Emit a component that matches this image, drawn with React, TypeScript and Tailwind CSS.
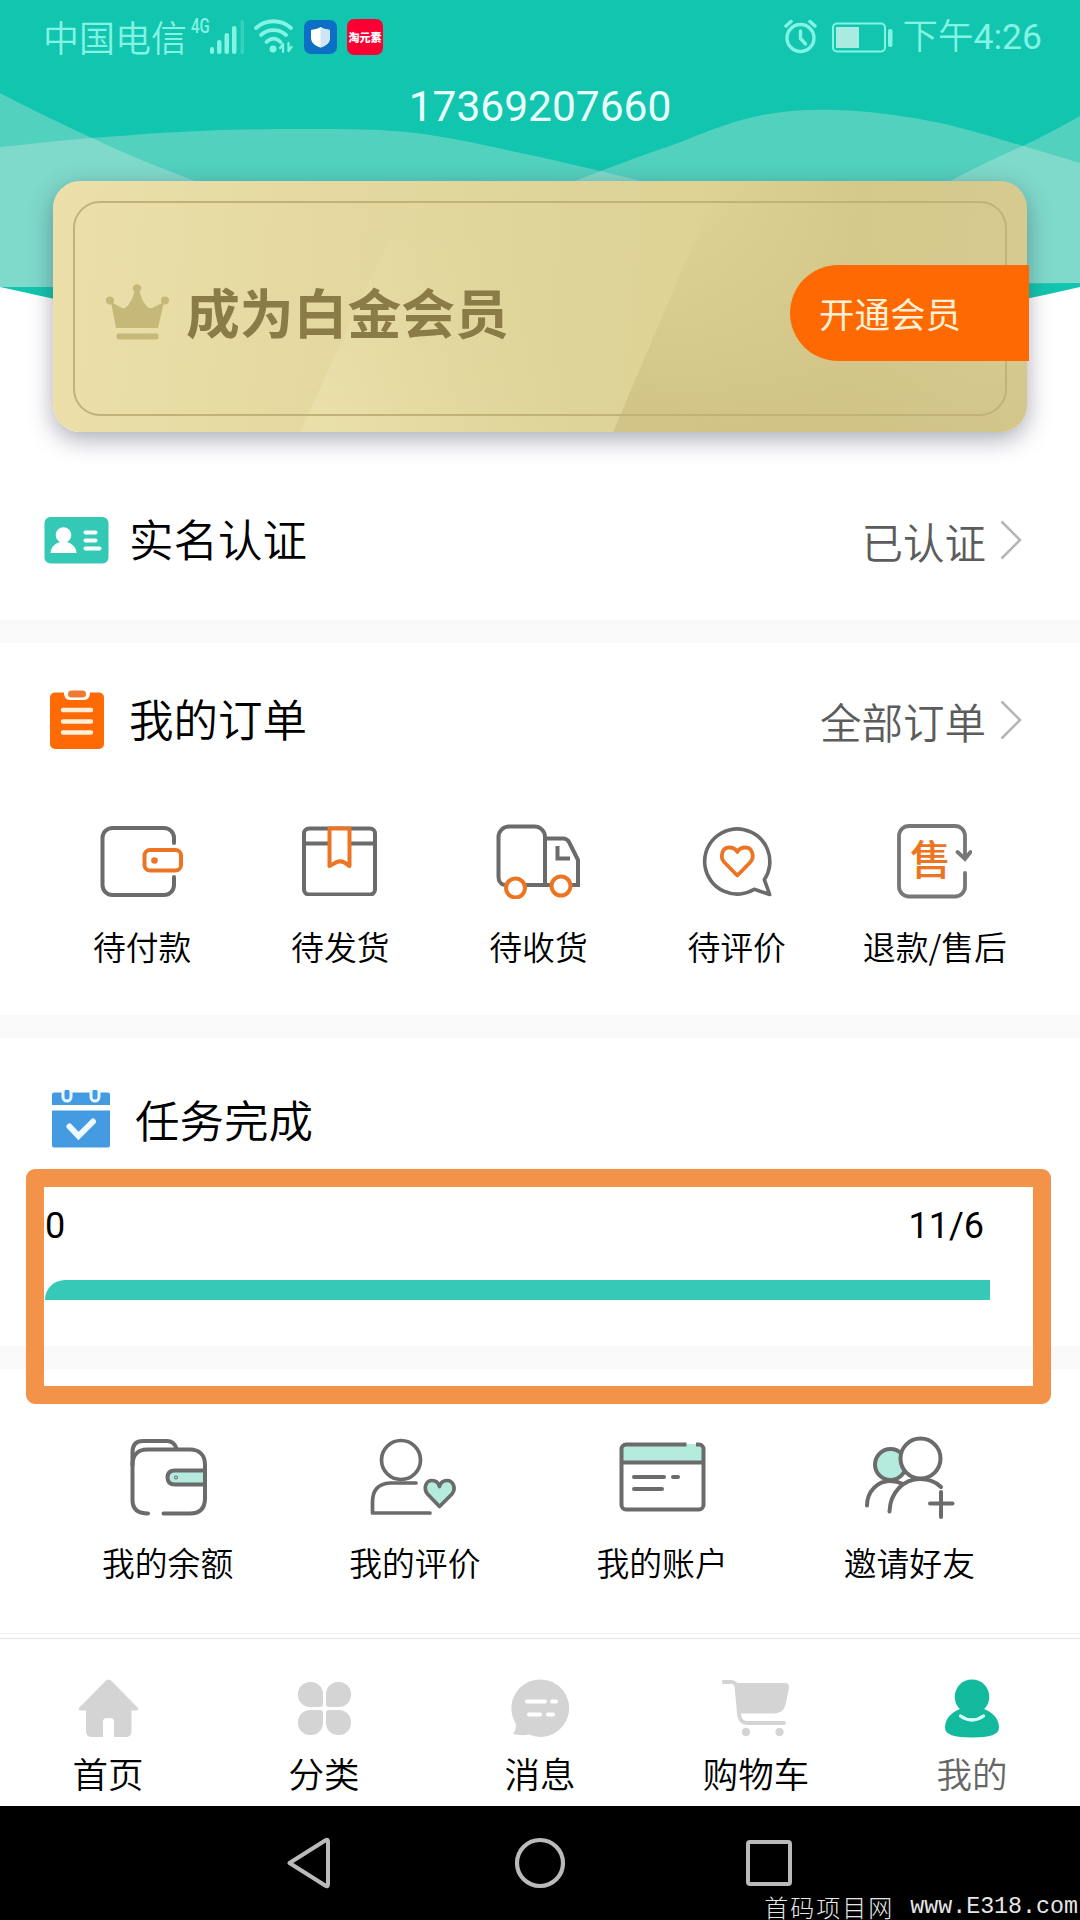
import type { ReactNode } from "react";
import clsx from "clsx";

const GRAY = "#6b6b6b";
const ORANGE = "#ec7524";
const MINT = "#b5ebdd";
const TAB = "#d4d4d4";

function HeaderWaves() {
  return (
    <svg className="absolute inset-x-0 top-0" width="1080" height="350" viewBox="0 0 1080 350">
      <path d="M0 0H1080V287Q810 350 540 350T0 287Z" fill="#12c5ae" />
      <g fill="#e8ede8" fillOpacity="0.3">
        <path d="M0 93C32 110 62 124 92 138C126 154 160 168 195 181L480 287H0Z" />
        <path d="M0 147C40 143 80 138 120 136C180 131 240 129 300 129C350 129 395 129 430 135C470 141 505 150 540 157C575 165 610 173 640 181L980 287H0Z" />
        <path d="M300 285L575 181C608 168 640 156 670 146C695 137 718 126 745 119C775 111 805 109 835 110C868 111 900 115 930 121C962 127 992 137 1020 145L1080 163V283Z" />
        <path d="M760 285L950 181C975 168 1000 156 1025 145C1044 136 1062 126 1080 116V283Z" />
      </g>
    </svg>
  );
}

function StatusBar() {
  return (
    <div className="relative flex h-[74px] items-center pr-[38px] pl-[43px] text-[#83f3e4]">
      <span className="mt-[-3px] text-[36px] leading-none font-[350]">中国电信</span>
      <span className="mb-[22px] ml-1 w-[20px] origin-left scale-x-75 font-[Roboto] text-[20px] leading-none font-medium">4G</span>
      <svg className="ml-[-2px]" width="36" height="36" viewBox="0 0 36 36" fill="currentColor">
        <rect x="1" y="28" width="4" height="7" rx="2" />
        <rect x="8" y="21" width="4.500" height="14" rx="2" />
        <rect x="15.500" y="14" width="4.500" height="21" rx="2" />
        <rect x="23" y="7" width="4.500" height="28" rx="2" />
        <rect x="31.500" y="1" width="3.500" height="34" rx="1.500" fillOpacity="0.3" />
      </svg>
      <svg className="mt-[-2px] ml-[9px]" width="40" height="35" viewBox="0 0 40 35" fill="none" stroke="currentColor" strokeWidth="3.800" strokeLinecap="round">
        <path d="M2 9C12 0 27 0 37 9M7 16C14 9.500 25 9.500 32 16M12.500 23C17 18.500 22 18.500 26.500 23" />
        <circle cx="19" cy="30" r="3.500" fill="currentColor" stroke="none" />
        <path d="M29 25V33M26 29L29 25M34.500 24V32M37.500 28L34.500 32" strokeWidth="2.200" />
      </svg>
      <svg className="ml-[10px]" width="33" height="34" viewBox="0 0 33 34">
        <rect width="33" height="34" rx="7" fill="#0b6fc6" />
        <path d="M16.500 7C19 9 23 9.500 26 10V18C26 23 21 26.500 16.500 27.500C12 26.500 7 23 7 18V10C10 9.500 14 9 16.500 7Z" fill="#fff" />
        <path d="M16.500 7C19 9 23 9.500 26 10V18C26 23 21 26.500 16.500 27.500Z" fill="#cfe4f4" />
      </svg>
      <div className="ml-[10px] flex h-[36px] w-[36px] items-center justify-center rounded-[7px] bg-[#fb0032]">
        <span className="text-[11px] leading-none font-black whitespace-nowrap text-white">淘元素</span>
      </div>

      <svg className="mt-[-2px] ml-auto" width="33" height="35" viewBox="0 0 33 35" fill="none" stroke="currentColor" strokeLinecap="round">
        <circle cx="16.500" cy="19" r="13.500" strokeWidth="3.400" />
        <path d="M16.500 12V19.500L21.500 25" strokeWidth="3.400" />
        <path d="M2 7L7 2.500M31 7L26 2.500" strokeWidth="3.500" />
      </svg>
      <svg className="ml-[15px]" width="62" height="31" viewBox="0 0 62 31" fill="none" stroke="currentColor">
        <rect x="1" y="1.500" width="52" height="28" rx="4" strokeWidth="2" />
        <rect x="4" y="5" width="23" height="21" fill="#a9ebe0" stroke="none" />
        <rect x="56" y="7" width="4.500" height="18" rx="2" fill="currentColor" stroke="none" />
      </svg>
      <span className="mt-[-2px] ml-[9px] text-[35.5px] leading-none font-[350]">
        下午<span className="font-[Roboto] font-normal">4:26</span>
      </span>
    </div>
  );
}

function MemberCard() {
  return (
    <div className="relative mx-[53px] mt-[42px] h-[251px] rounded-[27px] shadow-[0_7px_24px_rgba(50,50,80,0.42)]">
      <svg className="absolute inset-0 rounded-[27px]" width="974" height="251" viewBox="0 0 974 251">
        <defs>
          <linearGradient id="gold" x1="0" y1="0" x2="974" y2="90" gradientUnits="userSpaceOnUse">
            <stop offset="0" stopColor="#ecdfaa" />
            <stop offset="0.5" stopColor="#dfd499" />
            <stop offset="0.65" stopColor="#ded295" />
            <stop offset="0.82" stopColor="#d5c88b" />
            <stop offset="1" stopColor="#d7ca8f" />
          </linearGradient>
          <linearGradient id="facet" x1="270" y1="220" x2="480" y2="110" gradientUnits="userSpaceOnUse">
            <stop offset="0" stopColor="#ebe1ac" stopOpacity="0.75" />
            <stop offset="1" stopColor="#e3d89d" stopOpacity="0" />
          </linearGradient>
          <linearGradient id="shade" x1="680" y1="250" x2="745" y2="20" gradientUnits="userSpaceOnUse">
            <stop offset="0" stopColor="#cdbe82" />
            <stop offset="1" stopColor="#d5c88c" stopOpacity="0" />
          </linearGradient>
        </defs>
        <rect width="974" height="251" fill="url(#gold)" />
        <path d="M247 251L335 60H640L560 251Z" fill="url(#facet)" />
        <path d="M560 251L650 40L700 0H974V251Z" fill="url(#shade)" opacity="0.7" />
      </svg>
      <div className="relative flex h-full items-center pl-[53px]">
        <svg className="mt-[11px]" width="64" height="56" viewBox="0 0 64 56" fill="#c6b878">
          <path d="M5 18L16 24C21 26 26 17 29 6H33C36 17 41 26 46 24L58 18L52 44H10Z" />
          <circle cx="31" cy="4.500" r="4.200" />
          <circle cx="4" cy="16.500" r="4" />
          <circle cx="59" cy="16.500" r="4" />
          <rect x="10.500" y="49.500" width="42" height="6" rx="2" />
        </svg>
        <span className="mt-[9px] ml-[16px] text-[53.8px] leading-none font-bold text-[#8b7b47]">成为白金会员</span>
        <div className="absolute inset-x-[20px] top-[20px] bottom-[16px] rounded-[27px] border-[2.5px] border-[#c1b278]" />
        <button className="absolute top-[84px] -right-[2px] h-[96px] w-[239px] rounded-l-full bg-[#ff6902] pl-[29px] text-left text-[35.5px] leading-none text-[#fff1d8]">
          开通会员
        </button>
      </div>
    </div>
  );
}

function IdCardIcon() {
  return (
    <svg width="65" height="47" viewBox="0 0 65 47">
      <rect x="0.500" width="64" height="46.500" rx="6" fill="#34c9b4" />
      <g fill="#fff">
        <circle cx="19.500" cy="18" r="7.800" />
        <path d="M6.500 36C7 29 12 26.500 16 25H23C27 26.500 32 29 32.500 36Z" />
        <rect x="39.500" y="13.500" width="14" height="4" rx="2" />
        <rect x="39.500" y="21.500" width="14" height="4" rx="2" />
        <rect x="39.500" y="29.500" width="18" height="4" rx="2" />
      </g>
    </svg>
  );
}

function ClipboardIcon() {
  return (
    <svg width="56" height="60" viewBox="0 0 56 60">
      <path d="M6 2.500H15C15 7 17 10 21 10H35C39 10 41 7 41 2.500H50A5 5 0 0 1 55 7.500V54A5 5 0 0 1 50 59H6A5 5 0 0 1 1 54V7.500A5 5 0 0 1 6 2.500Z" fill="#ff6a05" />
      <rect x="19" y="0.500" width="18" height="7" rx="3.500" fill="#f07a32" />
      <path d="M14 20H42M14 31.500H42M14 42.500H42" stroke="#ffefd9" strokeWidth="4.500" strokeLinecap="round" />
    </svg>
  );
}

function CalendarIcon() {
  return (
    <svg width="58" height="58" viewBox="0 0 58 58">
      <path d="M2 2.500H56A2 2 0 0 1 58 4.500V15H0V4.500A2 2 0 0 1 2 2.500Z" fill="#449be2" />
      <path d="M0 20.500H58V55A2 2 0 0 1 56 57.500H2A2 2 0 0 1 0 55Z" fill="#449be2" />
      <path d="M15 0V7M43 0V7" stroke="#e9f8ff" strokeWidth="11" strokeLinecap="round" />
      <path d="M15 2V7M43 2V7" stroke="#449be2" strokeWidth="5" strokeLinecap="round" />
      <path d="M17.500 36.500L26.500 46L41 31.500" fill="none" stroke="#effaff" strokeWidth="6" strokeLinecap="round" />
    </svg>
  );
}

function PayIcon() {
  return (
    <svg width="84" height="72" viewBox="0 0 84 72" fill="none" strokeWidth="4" strokeLinecap="round">
      <path d="M74 18V13A10 10 0 0 0 64 3H12.500A10 10 0 0 0 2.500 13V60A10 10 0 0 0 12.500 70H64A10 10 0 0 0 74 60V52" stroke={GRAY} />
      <rect x="44.500" y="25" width="36.500" height="20.500" rx="5.500" stroke={ORANGE} />
      <circle cx="54.500" cy="35.500" r="3.300" fill={ORANGE} />
    </svg>
  );
}

function PackageIcon() {
  return (
    <svg width="76" height="70" viewBox="0 0 76 70" fill="none" strokeWidth="4">
      <rect x="2" y="2.500" width="71" height="66" rx="5" stroke={GRAY} />
      <path d="M2 17.500H73" stroke={GRAY} />
      <path d="M27.500 2.500H47.500V40L42.500 36.500Q37.500 34 33 37L27.500 40Z" fill="#fff" stroke={ORANGE} strokeLinejoin="round" />
    </svg>
  );
}

function TruckIcon() {
  return (
    <svg width="84" height="75" viewBox="0 0 84 75" fill="none" strokeWidth="4">
      <path d="M10 61C5 61 2.500 57 2.500 53V13A10.500 10.500 0 0 1 13 2.500H38A10.500 10.500 0 0 1 49 13V61M28 61H57M75 61H82V36L73 18Q71 14.500 67 14.500H49" stroke={GRAY} />
      <path d="M61.500 22V34.500H74" stroke={GRAY} />
      <circle cx="19.500" cy="64" r="9.500" fill="#fff" stroke={ORANGE} />
      <circle cx="65" cy="62" r="9.500" fill="#fff" stroke={ORANGE} />
    </svg>
  );
}

function CommentIcon() {
  return (
    <svg width="70" height="71" viewBox="0 0 70 71" fill="none" strokeLinejoin="round">
      <path d="M52.300 63.300A32.600 32.600 0 1 1 62.300 53.700L67.700 68.500Z" stroke={GRAY} strokeWidth="3.600" />
      <path d="M35.300 49.500L22.500 36.500C17.500 31 20 21.500 27 21.500C31 21.500 33.500 22.500 35.300 26C37 22.500 39.500 21.500 43.500 21.500C50.500 21.500 53 31 48 36.500Z" stroke={ORANGE} strokeWidth="3.800" />
    </svg>
  );
}

function RefundIcon() {
  return (
    <svg width="75" height="75" viewBox="0 0 75 75" fill="none">
      <path d="M68 34V12A10 10 0 0 0 58 2H12A10 10 0 0 0 2 12V62.500A10 10 0 0 0 12 72.500H58A10 10 0 0 0 68 62.500V49M60.500 28L68 35L73.500 28" stroke="#777" strokeWidth="3.800" strokeLinecap="round" />
      <text x="13" y="51" fill={ORANGE} fontSize="41" fontWeight="500">售</text>
    </svg>
  );
}

function BalanceIcon() {
  return (
    <svg width="78" height="79" viewBox="0 0 78 79" fill="none" stroke={GRAY} strokeWidth="4" strokeLinecap="round">
      <path d="M19 75.500C9 75.500 3.500 71 3.500 62V27C3.500 17 9 11.500 18 11.500H61C70 11.500 76 17 76 27V60C76 70 71 75.500 61 75.500H34.500" />
      <path d="M3.500 27V14Q3.500 3 14 3H38Q45 3 47.500 10.500" />
      <path d="M76 32.500H46Q38.500 32.500 38.500 39.500T46 46.500H76Z" fill={MINT} />
      <circle cx="47" cy="39.500" r="0.500" strokeWidth="3" />
    </svg>
  );
}

function ReviewIcon() {
  return (
    <svg className="mr-[4px]" width="90" height="78" viewBox="0 0 90 78" fill="none" stroke={GRAY} strokeWidth="3.700" strokeLinecap="round" strokeLinejoin="round">
      <circle cx="33" cy="22" r="19.500" />
      <path d="M48 45H22Q4.500 46 4.500 64V75H62" />
      <path d="M71.500 68.500L59.500 56C55 50 58 42.500 64 42.500C68 42.500 70.500 45 71.500 48.500C72.500 45 75 42.500 79 42.500C85 42.500 88.500 50 84 56Z" fill={MINT} />
    </svg>
  );
}

function AccountIcon() {
  return (
    <svg width="87" height="70" viewBox="0 0 87 70" fill="none" stroke={GRAY} strokeWidth="4">
      <rect x="3" y="2" width="81" height="18" fill={MINT} stroke="none" />
      <path d="M67.500 2.500H7A4.500 4.500 0 0 0 2.500 7V63A4.500 4.500 0 0 0 7 67.500H80A4.500 4.500 0 0 0 84.500 63V7A4.500 4.500 0 0 0 80 2.500H77M2.500 20.500H84.500" />
      <path d="M15 35H45M54 35H59M15 47H43" strokeLinecap="round" />
    </svg>
  );
}

function InviteIcon() {
  return (
    <svg width="91" height="83" viewBox="0 0 91 83" fill="none" stroke={GRAY} strokeWidth="4" strokeLinecap="round">
      <circle cx="26.500" cy="28.500" r="15.500" fill={MINT} />
      <circle cx="56.500" cy="22.500" r="20" fill="#fff" />
      <path d="M3 69.500C3 55 14 45 26 45Q33 45 39 48" />
      <path d="M25.500 75.500C26 57 39 43 56 43Q69 43 77 51" />
      <path d="M77 56V81M66 67.500H88.500" />
    </svg>
  );
}

function HomeIcon() {
  return (
    <svg width="61" height="59" viewBox="0 0 61 59" fill={TAB}>
      <path d="M27.500 2Q30.500 -1 33.500 2L60 29Q61 31.500 58 31.500H53.500V52Q53.500 58 47.500 58H36V43Q36 39 32 39H29Q25 39 25 43V58H14Q8 58 8 52V31.500H3Q0 31.500 1 29Z" />
    </svg>
  );
}

function CategoryIcon() {
  return (
    <div className="grid grid-cols-2 gap-[3px]">
      <i className="size-[25px] rounded-[12px] rounded-br-[3px] bg-[#d4d4d4]" />
      <i className="size-[25px] rounded-[12px] rounded-bl-[3px] bg-[#d4d4d4]" />
      <i className="size-[25px] rounded-[12px] rounded-tr-[3px] bg-[#d4d4d4]" />
      <i className="size-[25px] rounded-[12px] rounded-tl-[3px] bg-[#d4d4d4]" />
    </div>
  );
}

function MessageIcon() {
  return (
    <svg width="59" height="59" viewBox="0 0 59 59">
      <path d="M29.500 0.500A28.700 28.700 0 1 1 18 55.500Q10 57 2 55Q6 50 4.500 44A28.700 28.700 0 0 1 29.500 0.500Z" fill={TAB} />
      <path d="M16 22.500H34M41 22.500H45M18 35.500H29M37 35.500H42" stroke="#fff" strokeWidth="4" strokeLinecap="round" />
    </svg>
  );
}

function CartIcon() {
  return (
    <svg width="68" height="57" viewBox="0 0 68 57" fill={TAB}>
      <path d="M14 3H63Q67.500 3 67 8L63.500 25Q61 33.500 52 33.500H17.500Z" />
      <path d="M1.500 2H9Q14 2 14.500 7L17 34Q18 43 25 43H62" fill="none" stroke={TAB} strokeWidth="3.800" strokeLinecap="round" />
      <circle cx="24" cy="52" r="4.200" />
      <circle cx="57.500" cy="52" r="4.200" />
    </svg>
  );
}

function MineIcon() {
  return (
    <svg width="54" height="59" viewBox="0 0 54 59" fill="#12b99d">
      <circle cx="27" cy="17.800" r="17.300" />
      <path d="M15 30H39Q54 36 54 49Q54 58.500 27 58.500T0 49Q0 36 15 30Z" />
      <path d="M15.500 37Q27 45 38.500 37" fill="none" stroke="#d9fffa" strokeWidth="3.200" strokeLinecap="round" />
    </svg>
  );
}

const orderItems = [
  { label: "待付款", icon: <PayIcon /> },
  { label: "待发货", icon: <PackageIcon /> },
  { label: "待收货", icon: <TruckIcon /> },
  { label: "待评价", icon: <CommentIcon /> },
  { label: "退款/售后", icon: <RefundIcon /> },
];

const toolItems = [
  { label: "我的余额", icon: <BalanceIcon /> },
  { label: "我的评价", icon: <ReviewIcon /> },
  { label: "我的账户", icon: <AccountIcon /> },
  { label: "邀请好友", icon: <InviteIcon /> },
];

const tabs = [
  { label: "首页", icon: <HomeIcon /> },
  { label: "分类", icon: <CategoryIcon /> },
  { label: "消息", icon: <MessageIcon /> },
  { label: "购物车", icon: <CartIcon /> },
  { label: "我的", icon: <MineIcon />, active: true },
];

interface RowProps {
  icon: ReactNode;
  title: string;
  extra: string;
}

function Row({ icon, title, extra }: RowProps) {
  return (
    <div className="flex h-[154px] items-center pr-[58px] pl-[44px]">
      <div className="flex w-[65px] justify-center">{icon}</div>
      <span className="mt-[-3px] ml-[20px] text-[44.5px] leading-none font-[350]">{title}</span>
      <span className="mt-[3px] ml-auto text-[41.5px] leading-none font-[350] text-[#5c5c5c]">{extra}</span>
      <svg className="ml-[14px]" width="22" height="40" viewBox="0 0 22 40" fill="none" stroke="#b5b5b5" strokeWidth="2.500">
        <path d="M1.500 1.500L20 20L1.500 38.500" />
      </svg>
    </div>
  );
}

function Item({ icon, label }: { icon: ReactNode; label: string }) {
  return (
    <div className="flex flex-col items-center">
      <div className="flex h-[90px] items-center">{icon}</div>
      <span className="mt-[16px] text-[32.8px] leading-[48px] font-[350] whitespace-nowrap">{label}</span>
    </div>
  );
}

function Divider() {
  return <div className="h-[23px] shrink-0 bg-[#f9f9f9]" />;
}

export default function App() {
  return (
    <div className="relative flex h-[1920px] w-[1080px] flex-col overflow-hidden bg-white font-['Noto_Sans_CJK_SC',sans-serif] text-black">
      <header className="relative h-[463px] shrink-0">
        <HeaderWaves />
        <StatusBar />
        <h1 className="relative h-[65px] text-center font-[Roboto] text-[42.5px] leading-[65px] text-[#eafffc]">17369207660</h1>
        <MemberCard />
      </header>

      <section className="h-[157px] shrink-0">
        <Row icon={<IdCardIcon />} title="实名认证" extra="已认证" />
      </section>
      <Divider />

      <section className="h-[372px] shrink-0">
        <Row icon={<ClipboardIcon />} title="我的订单" extra="全部订单" />
        <div className="mt-[19px] grid grid-cols-5 pr-[46px] pl-[43px]">
          {orderItems.map((item) => (
            <Item key={item.label} {...item} />
          ))}
        </div>
      </section>
      <Divider />

      <section className="relative h-[308px] shrink-0">
        <div className="flex h-[164px] items-center pb-[3px] pl-[52px]">
          <CalendarIcon />
          <span className="mt-[1px] ml-[25px] text-[44.5px] leading-none font-[350]">任务完成</span>
        </div>
        <div className="flex h-[48px] items-center justify-between pr-[96px] pl-[45px] font-[Roboto] text-[36px] leading-none">
          <span>0</span>
          <span>11/6</span>
        </div>
        <div className="mt-[30px] mr-[90px] ml-[45px] h-[20px] rounded-tl-[20px] bg-[#37c9b8]" />
        {/* highlight frame, hangs over the divider below */}
        <div className="absolute top-[131px] left-[26px] z-10 h-[235px] w-[1025px] rounded-[9px] bg-transparent outline-[18px] -outline-offset-[18px] outline-[#f39249]" />
      </section>
      <Divider />

      <section className="h-[264px] shrink-0 pt-[63px]">
        <div className="grid grid-cols-4 pr-[47px] pl-[44px]">
          {toolItems.map((item) => (
            <Item key={item.label} {...item} />
          ))}
        </div>
      </section>
      <div className="h-[5px] shrink-0 border-t border-[#f0f0f0]" />

      <nav className="grid h-[168px] shrink-0 grid-cols-5 border-t border-[#e2e2e2]">
        {tabs.map((tab) => (
          <div key={tab.label} className="flex flex-col items-center pt-[35px]">
            <div className="flex h-[68px] items-center">{tab.icon}</div>
            <span className={clsx("mt-[7px] text-[35.5px] leading-[48px] font-[350]", tab.active && "text-[#666]")}>{tab.label}</span>
          </div>
        ))}
      </nav>

      <footer className="relative flex h-[114px] shrink-0 items-center bg-black">
        <svg className="ml-[287px]" width="44" height="52" viewBox="0 0 44 52" fill="none" stroke="#bababa" strokeWidth="4">
          <path d="M2.500 26L39 3Q41 2 41 5V47Q41 50 39 49Z" strokeLinejoin="round" />
        </svg>
        <svg className="ml-[183px]" width="52" height="52" viewBox="0 0 52 52" fill="none" stroke="#bababa" strokeWidth="4.200">
          <circle cx="26" cy="26" r="23" />
        </svg>
        <div className="ml-[180px] h-[46px] w-[46px] rounded-[4px] border-[4.500px] border-[#bababa]" />
        <div className="absolute right-[2px] bottom-0 flex items-end whitespace-nowrap text-[#e6e6e6]">
          <span className="text-[24px] leading-[26px] font-light tracking-[2px]">首码项目网</span>
          <span className="ml-[16px] font-['Liberation_Mono',monospace] text-[23.3px] leading-[25px]">www.E318.com</span>
        </div>
      </footer>
    </div>
  );
}
